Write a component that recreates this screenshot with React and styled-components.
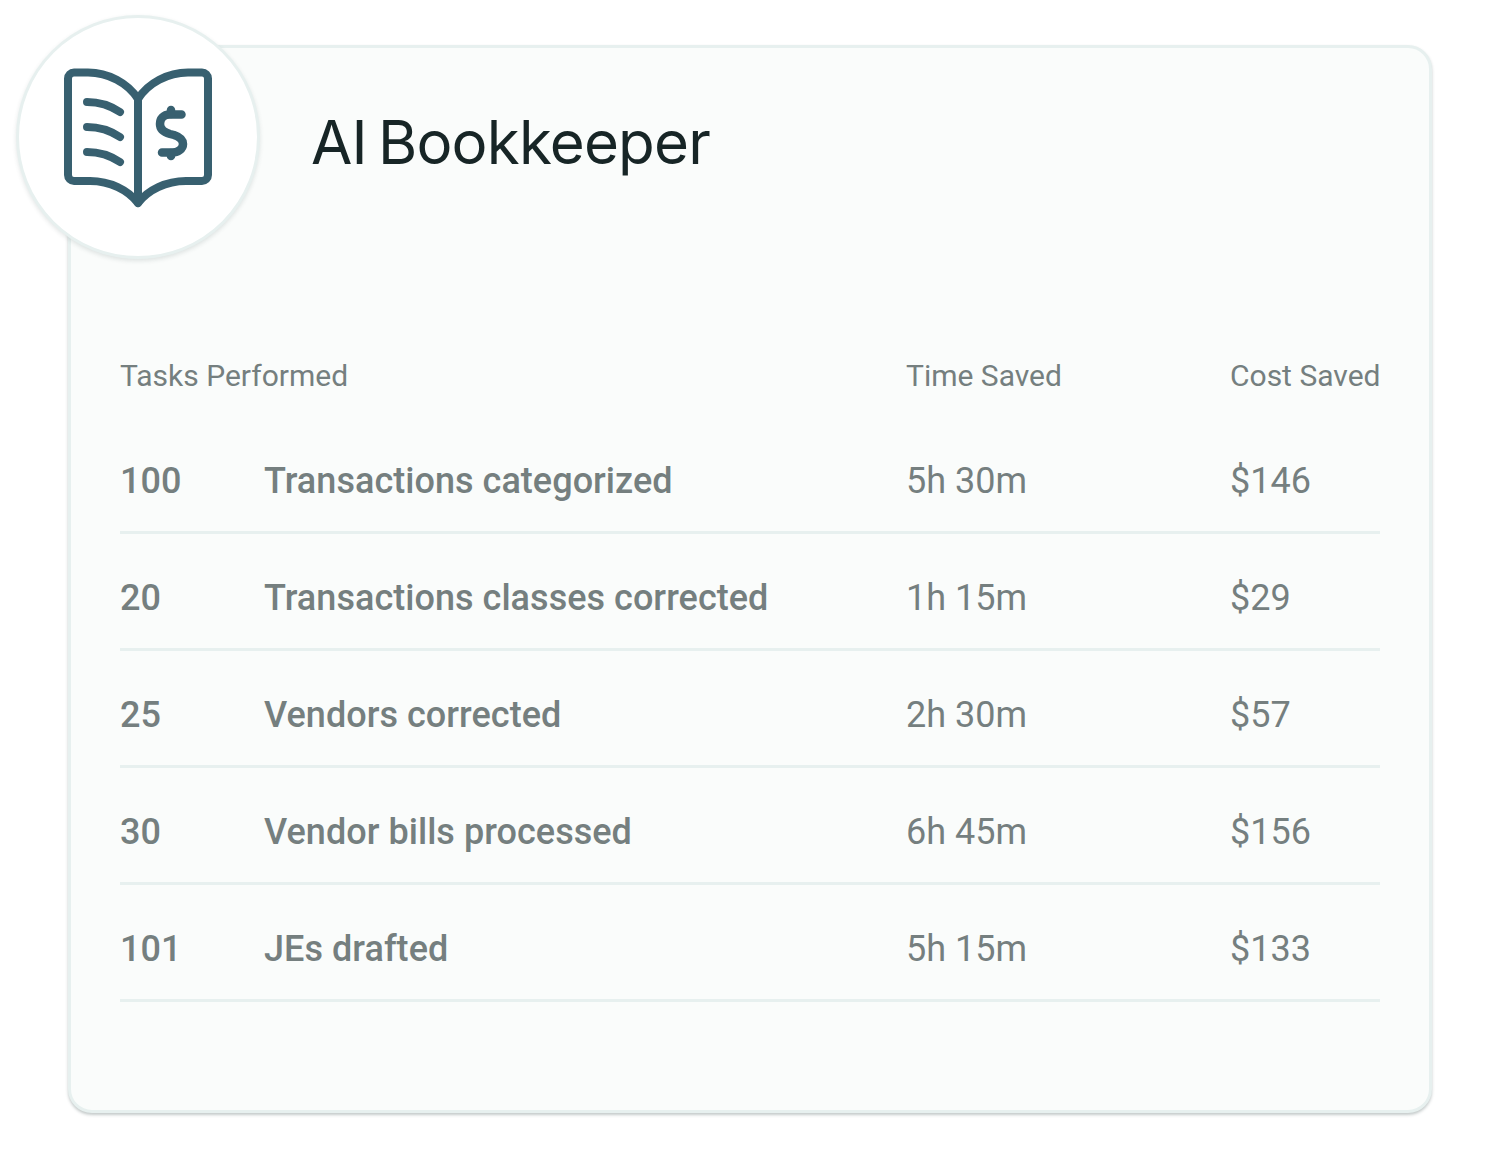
import React from 'react';
import styled, { createGlobalStyle } from 'styled-components';

const GlobalStyle = createGlobalStyle`
  html, body {
    margin: 0;
    padding: 0;
    background: #fff;
  }
`;

const Page = styled.div`
  position: relative;
  width: 1500px;
  height: 1158px;
  padding: 45px 68px 0;
  box-sizing: border-box;
`;

const Card = styled.section`
  box-sizing: border-box;
  width: 1364px;
  height: 1068px;
  padding: 0 49px;
  background: #fafcfb;
  border: 3px solid #e7f0ef;
  border-radius: 24px;
  box-shadow: 0 2px 3px rgba(60, 80, 80, 0.3);
`;

const Badge = styled.div`
  position: absolute;
  left: 16px;
  top: 15px;
  width: 244px;
  height: 244px;
  box-sizing: border-box;
  padding-top: 2px;
  display: flex;
  align-items: center;
  justify-content: center;
  background: #fff;
  border: 3px solid #e7f0ef;
  border-radius: 50%;
  box-shadow: 0 2px 4px rgba(60, 80, 80, 0.14);
`;

const Title = styled.h1`
  margin: 0;
  padding: 58px 0 0 191px;
  height: 287px;
  box-sizing: border-box;
  font-family: Inter, sans-serif;
  font-weight: 400;
  font-size: 60px;
  line-height: 72px;
  letter-spacing: -0.8px;
  word-spacing: -5px;
  color: #172526;
`;

const Row = styled.div`
  display: grid;
  grid-template-columns: 144px 642px 324px 150px;
  align-items: center;
  box-sizing: border-box;
  font-family: Roboto, sans-serif;
  color: #757f7f;
  ${(p) =>
    p.$head
      ? `
    height: 82px;
    padding-bottom: 2px;
    font-size: 30px;
    font-weight: 400;
    white-space: nowrap;
  `
      : `
    height: 117px;
    padding-top: 14px;
    font-size: 36px;
    font-weight: 400;
    border-bottom: 3px solid #e7f0ef;
  `}
`;

const HeadSpan = styled.div`
  grid-column: span 2;
`;

const Count = styled.div`
  font-weight: 500;
`;

const Task = styled.div`
  font-weight: 500;
  letter-spacing: 0.04px;
`;

const DollarMark = styled.g`
  stroke-width: 8.5px;
`;

function BookIcon() {
  return (
    <svg width="156" height="148" viewBox="60 64 156 148" fill="none" stroke="#386070" strokeWidth="8" strokeLinecap="round" strokeLinejoin="round">
      <path d="M138 99C128 83 108 72.5 88 72.5H74a6 6 0 0 0-6 6V175a6 6 0 0 0 6 6H90C110 181 128 190 138 203" />
      <path d="M138 99C148 83 168 72.5 188 72.5H202a6 6 0 0 1 6 6V175a6 6 0 0 1-6 6H186C166 181 148 190 138 203V99" />
      <path d="M87 102C100 102 111 106 120 112" />
      <path d="M87 127C100 127 111 131 120 137" />
      <path d="M87 152C100 152 111 156 120 162" />
      <DollarMark>
        <path d="M181.500 114.500H170C163 114.500 160 119 160 124C160 129 163 132 170 134L174 135C180 137 183 140 183 144C183 149 178 152.500 172 152.500H162" />
        <path d="M171 110V114M171 153V156" />
      </DollarMark>
    </svg>
  );
}

const rows = [
  ['100', 'Transactions categorized', '5h 30m', '$146'],
  ['20', 'Transactions classes corrected', '1h 15m', '$29'],
  ['25', 'Vendors corrected', '2h 30m', '$57'],
  ['30', 'Vendor bills processed', '6h 45m', '$156'],
  ['101', 'JEs drafted', '5h 15m', '$133'],
];

export default function App() {
  return (
    <Page>
      <GlobalStyle />
      <Card>
        <Title>AI Bookkeeper</Title>
        <Row $head>
          <HeadSpan>Tasks Performed</HeadSpan>
          <div>Time Saved</div>
          <div>Cost Saved</div>
        </Row>
        {rows.map((r) => (
          <Row key={r[1]}>
            <Count>{r[0]}</Count>
            <Task>{r[1]}</Task>
            <div>{r[2]}</div>
            <div>{r[3]}</div>
          </Row>
        ))}
      </Card>
      <Badge>
        <BookIcon />
      </Badge>
    </Page>
  );
}
